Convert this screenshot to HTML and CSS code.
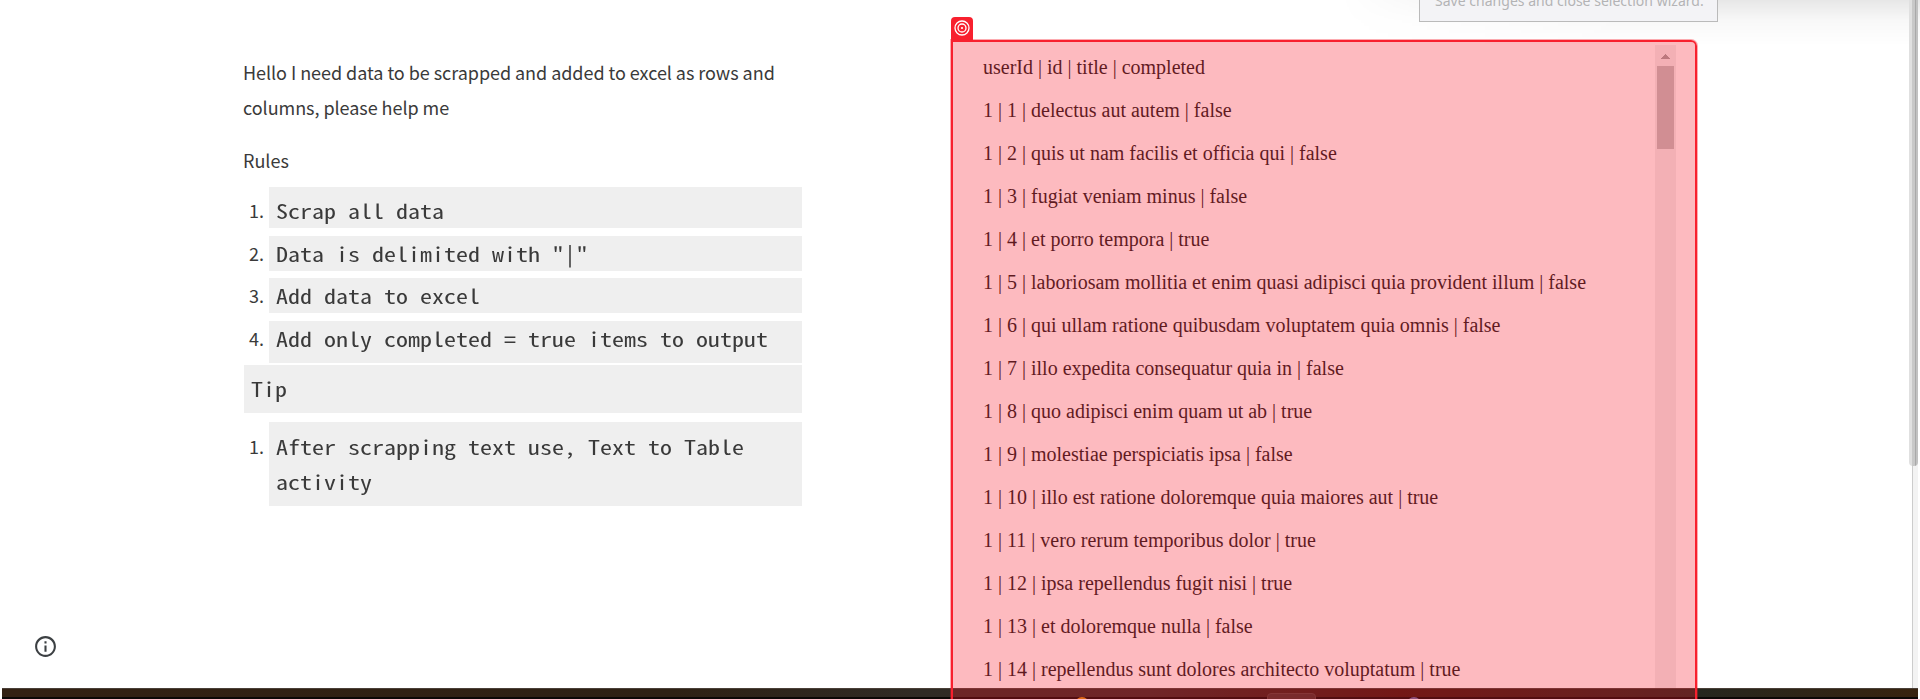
FILE: index.html
```
<!DOCTYPE html>
<html lang="en">
<head>
<meta charset="utf-8">
<title>Scrape task</title>
<link rel="stylesheet" href="styles.css">
</head>
<body>
<main class="page">
  <section class="brief">
    <p class="intro">Hello I need data to be scrapped and added to excel as rows and<br>columns, please help me</p>
    <p class="rules-title">Rules</p>
    <ol class="rules">
      <li class="rule first"><span class="num">1.</span><code><span class="wide">Scrap all data</span></code></li>
      <li class="rule second"><span class="num">2.</span><code><span class="wide">Data is delimited with "|"</span></code></li>
      <li class="rule third"><span class="num">3.</span><code><span class="wide">Add data to excel</span></code></li>
      <li class="rule fourth"><span class="num">4.</span><code><span class="wide">Add only completed = true items to output</span></code></li>
    </ol>
    <p class="tip"><span class="wide">Tip</span></p>
    <ol class="rules">
      <li class="rule last"><span class="num">1.</span><code><span class="wide">After scrapping text use, Text to Table<br>activity</span></code></li>
    </ol>
  </section>
  <section class="data">
    <p>userId | id | title | completed</p>
    <p>1 | 1 | delectus aut autem | false</p>
    <p>1 | 2 | quis ut nam facilis et officia qui | false</p>
    <p>1 | 3 | fugiat veniam minus | false</p>
    <p>1 | 4 | et porro tempora | true</p>
    <p>1 | 5 | laboriosam mollitia et enim quasi adipisci quia provident illum | false</p>
    <p>1 | 6 | qui ullam ratione quibusdam voluptatem quia omnis | false</p>
    <p>1 | 7 | illo expedita consequatur quia in | false</p>
    <p>1 | 8 | quo adipisci enim quam ut ab | true</p>
    <p>1 | 9 | molestiae perspiciatis ipsa | false</p>
    <p>1 | 10 | illo est ratione doloremque quia maiores aut | true</p>
    <p>1 | 11 | vero rerum temporibus dolor | true</p>
    <p>1 | 12 | ipsa repellendus fugit nisi | true</p>
    <p>1 | 13 | et doloremque nulla | false</p>
    <p>1 | 14 | repellendus sunt dolores architecto voluptatum | true</p>
  </section>
  <div class="frame-scroll">
    <svg class="arrow" viewBox="0 0 9 5"><path d="M4 0h1v1h1v1h1v1h1v1h1v1H0V4h1V3h1V2h1V1h1z"/></svg>
    <div class="thumb"></div>
  </div>
</main>
<div class="shade"></div>
<div class="tooltip">Save changes and close selection wizard.</div>
<div class="page-scroll"><div class="page-thumb"></div></div>
<svg class="info" viewBox="0 0 24 24"><path d="M11 7h2v2h-2zm0 4h2v6h-2zm1-9C6.48 2 2 6.48 2 12s4.48 10 10 10 10-4.480 10-10S17.52 2 12 2zm0 18c-4.410 0-8-3.590-8-8s3.590-8 8-8 8 3.590 8 8-3.590 8-8 8z"/></svg>
<div class="taskbar"><i class="dot orange"></i><i class="tab"></i><i class="dot blue"></i></div>
<div class="selection"></div>
<div class="badge"><svg viewBox="0 0 16 16"><circle cx="8" cy="8" r="7"/><circle cx="8" cy="8" r="4"/><circle class="center" cx="8" cy="8" r="1.100"/></svg></div>
</body>
</html>
```
FILE: styles.css
```
* { box-sizing: border-box; }
body {
  margin: 0;
  width: 1920px;
  height: 699px;
  position: relative;
  overflow: hidden;
  background: #fff;
  color: #3a3a3a;
}
p, ol { margin: 0; padding: 0; }
.page {
  display: flex;
  height: 699px;
}
.brief {
  width: 559px;
  margin-left: 243px;
  padding-top: 55px;
  font: 18px/35px "Noto Sans CJK SC", sans-serif;
}
.intro { white-space: nowrap; letter-spacing: -0.045px; }
.rules-title { padding-top: 18px; height: 62px; white-space: nowrap; }
.rules { list-style: none; }
.rule { display: flex; }
.num { width: 26px; padding-left: 6px; flex: none; }
.brief code, .tip {
  flex: 1;
  background: #efefef;
  font: 20px/35px "Noto Sans Mono CJK SC", "Liberation Mono", monospace;
  white-space: nowrap;
}
.wide { display: inline-block; transform: scaleX(1.2); transform-origin: left; }
.brief code { padding-left: 7px; }
.first { height: 41px; margin-bottom: 8px; }
.first code, .first .num { padding-top: 6px; }
.second { height: 35px; margin-bottom: 7px; }
.third { height: 35px; margin-bottom: 8px; }
.fourth { height: 42px; margin-bottom: 2px; }
.tip { margin-left: 1px; padding: 6px 0 0 7px; height: 48px; margin-bottom: 9px; }
.last { height: 84px; }
.last code, .last .num { padding-top: 7px; }
.data {
  width: 672px;
  margin-left: 181px;
  padding-top: 45.500px;
  font: 20px/43.030px "Liberation Serif", serif;
  color: #1c1c1c;
  white-space: nowrap;
}
.frame-scroll {
  width: 21px;
  margin-top: 45px;
  background: #f1f1f1;
  display: flex;
  flex-direction: column;
  align-items: center;
}
.arrow { width: 9px; height: 5px; margin: 9px 0 7px; fill: #a3a3a3; }
.thumb { width: 17px; height: 83px; background: #c1c1c1; }
.shade {
  position: absolute;
  left: 1340px;
  top: 0;
  width: 580px;
  height: 46px;
  background: linear-gradient(#00000018, #00000007 45%, transparent);
  mask-image: linear-gradient(to right, transparent, #000 50%);
}
.tooltip {
  position: absolute;
  left: 1419px;
  top: -14px;
  width: 299px;
  height: 36px;
  padding-left: 15px;
  border: 1px solid #bababa;
  background: #f3f3f6;
  color: #b3b3b5;
  font: 14px/28px "Noto Sans", sans-serif;
  letter-spacing: 0.020px;
  white-space: nowrap;
}
.page-scroll {
  position: absolute;
  left: 1909px;
  top: 0;
  width: 9px;
  height: 688px;
  background: linear-gradient(to right, #fff 3px, #ccc 3px 4px, #f3f3f3 4px);
}
.page-thumb {
  height: 466px;
  border-radius: 0 0 4px 4px;
  background: linear-gradient(to right, #e0e0e0 3px, #c8c8c8 3px 6px, #a9a9a9 6px 7px, #c1c1c1 7px);
}
.info {
  position: absolute;
  left: 33px;
  top: 634px;
  width: 25px;
  height: 25px;
  fill: #3c4043;
}
.taskbar {
  position: absolute;
  left: 2px;
  top: 688px;
  width: 1916px;
  height: 11px;
  overflow: hidden;
  background: linear-gradient(transparent 8px, #0c0806 8px), linear-gradient(to right, #332113, #2e2114 35%, #302b25 48%, #352b27 60%, #3a180e 73%, #25271f 88%, #38230f);
  border-top: 1px solid #4a4038;
}
.dot { position: absolute; top: 8px; width: 14px; height: 14px; border-radius: 50%; }
.orange { left: 1073px; background: #d98c12; }
.blue { left: 1405px; background: #6068a0; }
.tab { position: absolute; left: 1265px; top: 4px; width: 49px; height: 14px; border-radius: 4px; border: 1px solid #53413b; background: #43322d; }
.selection {
  position: absolute;
  left: 951px;
  top: 40px;
  width: 746px;
  height: 680px;
  border: 2px solid #f8202e;
  border-radius: 0 6px 0 0;
  box-shadow: 0 0 0 1px #f8202e60;
  background: rgba(248, 25, 42, 0.3);
  background-clip: padding-box;
}
.badge {
  position: absolute;
  left: 951px;
  top: 17px;
  width: 22px;
  height: 23px;
  border-radius: 4px 4px 0 0;
  background: #f8202e;
  display: flex;
  padding: 3px 0 0 3px;
}
.badge svg { width: 16px; height: 16px; fill: none; stroke: #fff; stroke-width: 1.300; }
.badge .center { fill: #fff; stroke: none; }
```
